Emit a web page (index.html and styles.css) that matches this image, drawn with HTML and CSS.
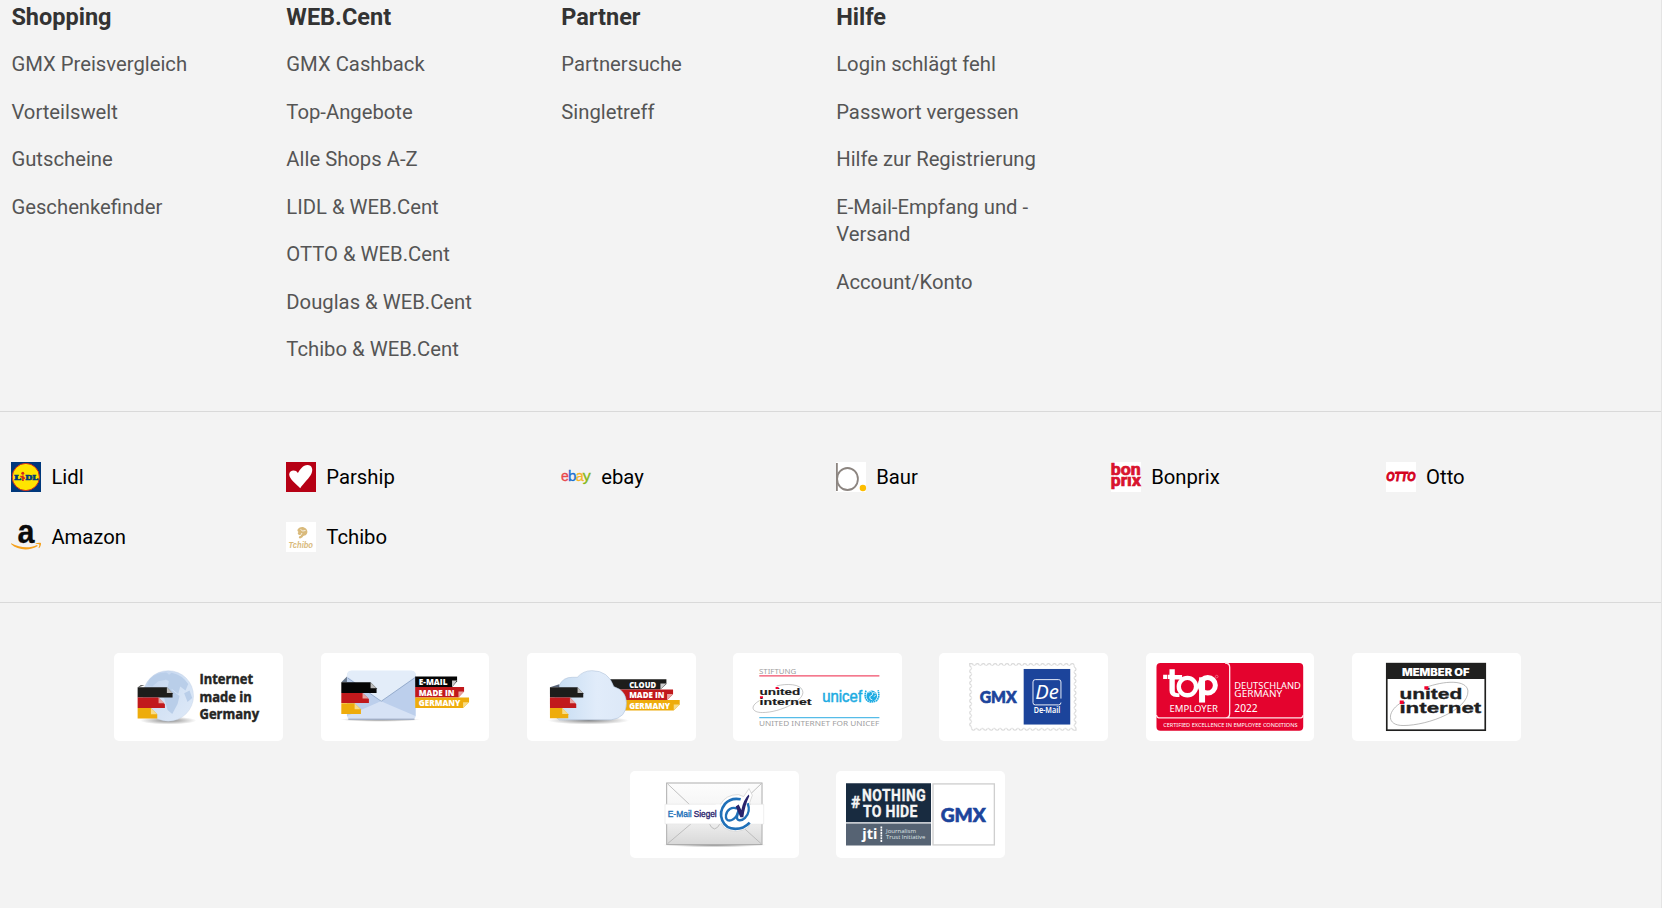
FILE: index.html
```html
<!DOCTYPE html>
<html lang="de">
<head>
<meta charset="utf-8">
<title>GMX</title>
<link rel="stylesheet" href="styles.css">
</head>
<body>
<footer class="footer">
  <nav class="links">
    <section class="col">
      <h3>Shopping</h3>
      <ul>
        <li><a>GMX Preisvergleich</a></li>
        <li><a>Vorteilswelt</a></li>
        <li><a>Gutscheine</a></li>
        <li><a>Geschenkefinder</a></li>
      </ul>
    </section>
    <section class="col">
      <h3>WEB.Cent</h3>
      <ul>
        <li><a>GMX Cashback</a></li>
        <li><a>Top-Angebote</a></li>
        <li><a>Alle Shops A-Z</a></li>
        <li><a>LIDL &amp; WEB.Cent</a></li>
        <li><a>OTTO &amp; WEB.Cent</a></li>
        <li><a>Douglas &amp; WEB.Cent</a></li>
        <li><a>Tchibo &amp; WEB.Cent</a></li>
      </ul>
    </section>
    <section class="col">
      <h3>Partner</h3>
      <ul>
        <li><a>Partnersuche</a></li>
        <li><a>Singletreff</a></li>
      </ul>
    </section>
    <section class="col">
      <h3>Hilfe</h3>
      <ul>
        <li><a>Login schlägt fehl</a></li>
        <li><a>Passwort vergessen</a></li>
        <li><a>Hilfe zur Registrierung</a></li>
        <li><a>E-Mail-Empfang und -<br>Versand</a></li>
        <li><a>Account/Konto</a></li>
      </ul>
    </section>
  </nav>

  <div class="shops">
    <a class="shop">
      <svg class="icon" viewBox="0 0 30 30"><path fill="#00387b" d="M0 0h30v30H0z"/><circle cx="14.8" cy="15" r="13.6" fill="#ffe500" stroke="#d22a1e" stroke-width="1"/><g font-family="DejaVu Serif" font-weight="700" font-size="8" fill="#00387b" stroke="#00387b" stroke-width=".7"><text x="3" y="18" textLength="7" lengthAdjust="spacingAndGlyphs">L</text><text x="14.2" y="18" textLength="12.8" lengthAdjust="spacingAndGlyphs">DL</text></g><circle cx="11.8" cy="11.2" r="1.5" fill="#d22a1e"/><path d="M9.4 14.2l4.6 2.2M11.9 13.5v5.5" stroke="#d22a1e" stroke-width="1.7"/></svg>
      <span>Lidl</span>
    </a>
    <a class="shop">
      <svg class="icon" viewBox="0 0 30 30"><path fill="#b60014" d="M0 0h30v30H0z"/><path fill="#fff" d="M14.2 26.2C11 22.5 3.2 17.2 3.2 12.5c0-4.400 6.500-5.600 8.700-1.500C14 7.500 17 3 21.500 3c4.500 0 5.600 4.400 4.200 8-2 5-8.200 10.200-11.500 15.200z"/></svg>
      <span>Parship</span>
    </a>
    <a class="shop">
      <svg class="icon" viewBox="0 0 30 30"><g font-family="Liberation Sans" font-size="14" stroke-width=".3"><text x="0" y="18.800" fill="#e8474c" stroke="#e8474c" textLength="7.800" lengthAdjust="spacingAndGlyphs">e</text><text x="7" y="18.800" fill="#1d6fd0" stroke="#1d6fd0" textLength="8.400" lengthAdjust="spacingAndGlyphs">b</text><text x="14.800" y="18.800" fill="#f6b42c" stroke="#f6b42c" textLength="8" lengthAdjust="spacingAndGlyphs">a</text><text x="21.800" y="18.800" fill="#86b817" stroke="#86b817" textLength="8" lengthAdjust="spacingAndGlyphs">y</text></g></svg>
      <span>ebay</span>
    </a>
    <a class="shop">
      <svg class="icon" viewBox="0 0 30 30"><path fill="#fff" d="M0 0h30v30H0z"/><path d="M.9 1v28" stroke="#8c8580" stroke-width="1.800"/><ellipse cx="11.500" cy="17" rx="10.400" ry="11" fill="none" stroke="#8c8580" stroke-width="1.800"/><circle cx="26.900" cy="26" r="3.200" fill="#fdbd00"/></svg>
      <span>Baur</span>
    </a>
    <a class="shop">
      <svg class="icon" viewBox="0 0 30 30"><path fill="#fff" d="M0 0h30v30H0z"/><g fill="#d8142d" stroke="#d8142d" stroke-width=".7" font-family="Roboto" font-weight="700"><text x="-.2" y="12.600" font-size="16.500" textLength="30" lengthAdjust="spacingAndGlyphs">bon</text><text x="-.2" y="24.200" font-size="16.500" textLength="30" lengthAdjust="spacingAndGlyphs">prıx</text></g></svg>
      <span>Bonprix</span>
    </a>
    <a class="shop">
      <svg class="icon" viewBox="0 0 30 30"><path fill="#fff" d="M0 0h30v30H0z"/><text x=".2" y="19.200" font-family="Liberation Sans" font-style="italic" font-weight="700" font-size="12.500" fill="#d4021d" stroke="#d4021d" stroke-width=".9" textLength="29.200" lengthAdjust="spacingAndGlyphs">OTTO</text></svg>
      <span>Otto</span>
    </a>
    <a class="shop">
      <svg class="icon" viewBox="0 0 30 30"><text x="6.500" y="20.800" font-family="Liberation Sans" font-weight="700" font-size="34" fill="#0a0a0a" stroke="#0a0a0a" stroke-width=".3" textLength="17" lengthAdjust="spacingAndGlyphs">a</text><path fill="#f5a11c" d="M.2 21.200C9 26 18.500 26.500 26 23l.8 1C19 28.900 7 28.800 0 22zM24.500 21.600c2-1 4-1 5.500-.6.200 2-.8 4-2 5.200l-.5-.4c.6-1.200 1-2.400.8-3.400-1.200-.4-2.400-.4-3.600-.3z"/></svg>
      <span>Amazon</span>
    </a>
    <a class="shop">
      <svg class="icon" viewBox="0 0 30 30"><path fill="#fff" d="M0 0h30v30H0z"/><g fill="#d9ba7c"><path d="M12 7c1-1.500 4-2.500 6-1.500 3 1 4 4 3 6-1 2.500-3 1.500-4 3-.8 1.200-3 2.800-4 1.500-.8-1.200 1-2 1.500-3C12 13 11 11.500 12.500 10c-1.200-.8-1.500-2-.5-3z"/><path d="M14.500 7.500q2 2.500 5 1M16 11q-1 2-2 3" stroke="#fff" stroke-width=".8" fill="none"/><text x="2.500" y="25.600" font-family="Liberation Sans" font-weight="700" font-style="italic" font-size="9.500" textLength="24.500" lengthAdjust="spacingAndGlyphs">Tchibo</text></g></svg>
      <span>Tchibo</span>
    </a>
  </div>

  <div class="seals">
    <a class="seal">
      <svg viewBox="27.500 39 506 263">
        <defs>
          <linearGradient id="globe" x1="0" y1="0" x2="1" y2="1"><stop offset="0" stop-color="#bdd0ec"/><stop offset=".5" stop-color="#d2e1f4"/><stop offset="1" stop-color="#dfeaf8"/></linearGradient>
          <radialGradient id="shade"><stop offset="0" stop-color="#888"/><stop offset="1" stop-color="#888" stop-opacity="0"/></radialGradient>
        </defs>
        <ellipse cx="190" cy="242" rx="85" ry="12" fill="url(#shade)"/>
        <circle cx="190" cy="168" r="76" fill="url(#globe)" stroke="#bccbe0"/>
        <path fill="#b9cee9" d="M134 118q22-22 52-20l12 12-18 10-20 4-18 16-16-4zM200 98q32 6 50 34l-8 20-16-12-6 22-18-14-16 4 6-28-14-8zM168 152l30-4 26 20-6 24-16 30-14-12-10-34-12-8zM238 160l16-8 8 22-14 12zM126 180l14 8-2 16-12-8z"/>
        <path d="M99 142l20-6h-12z" fill="#333"/>
        <path fill="#1d1d1b" d="M98 142h88l17 18v13H98z"/><path fill="#c1191c" d="M98 173h62l20 20v11H98z"/><path fill="#eeac0c" d="M98 204h40l19 19v13H98z"/>
        <path fill="#bbb" d="M186 142v17h17z"/><path fill="#e6a4a1" d="M161 173v17h18z"/><path fill="#f7dc88" d="M138 204v19h19z"/>
        <g font-family="Open Sans" font-weight="700" font-size="45" fill="#252523" stroke="#252523" stroke-width="1.500"><text x="284" y="133" textLength="161" lengthAdjust="spacingAndGlyphs">Internet</text><text x="284" y="186" textLength="157" lengthAdjust="spacingAndGlyphs">made in</text><text x="284" y="238" textLength="179" lengthAdjust="spacingAndGlyphs">Germany</text></g>
      </svg>
    </a>
    <a class="seal">
      <svg viewBox="32.500 39 506 263">
        <ellipse cx="210" cy="239" rx="120" ry="7" fill="url(#shade)"/>
        <rect x="110" y="92" width="207" height="148" rx="14" fill="#d6e2f5"/>
        <path fill="#bccfec" d="M316 112v116L212 184zM110 112v116l102-44z"/><path fill="#d6e2f5" d="M118 238l94-54 96 54z"/>
        <path fill="#e3edf9" d="M110 108q0-16 14-16h180q13 0 13 16l-104 76z"/><path d="M112 114l101 70 103-72" fill="none" stroke="#8ba3c5" stroke-width="2.500"/><path d="M114 238h199" stroke="#909fb7" stroke-width="3"/>
        <path d="M93 127l17-17v17z" fill="#68788c"/>
        <path fill="#050505" d="M93 127h88l18 18v14H93z"/><path fill="#c1191c" d="M93 159h64l19 18v12H93z"/><path fill="#eeac0c" d="M93 190h40l19 18v14H93z"/>
        <path fill="#bbb" d="M181 127v18h18z"/><path fill="#e6a4a1" d="M157 159v17h18z"/><path fill="#f7dc88" d="M133 190v18h18z"/>
        <path fill="#050505" d="M315 110h126v14l-15 17H315z"/><path fill="#c1191c" d="M315 141h147v14l-17 18H315z"/><path fill="#eeac0c" d="M315 173h162v14l-18 17H315z"/>
        <path fill="#ccc" d="M441 122h-15v19z"/><path fill="#e6a4a1" d="M462 155h-17v17z"/><path fill="#f7dc88" d="M477 187h-18v17z"/>
        <g font-family="Open Sans" font-weight="800" font-size="27" fill="#fff"><text x="326" y="136" textLength="86" lengthAdjust="spacingAndGlyphs">E-MAIL</text><text x="326" y="167" textLength="107" lengthAdjust="spacingAndGlyphs">MADE IN</text><text x="326" y="198" textLength="125" lengthAdjust="spacingAndGlyphs">GERMANY</text></g>
      </svg>
    </a>
    <a class="seal">
      <svg viewBox="35.500 39 506 263">
        <defs><linearGradient id="cloud"><stop offset="0" stop-color="#c4dbf1"/><stop offset=".6" stop-color="#e1ecfa"/><stop offset="1" stop-color="#dce8f7"/></linearGradient></defs>
        <path fill="#1d1d1b" d="M284 118h170v14l-18 17H284z"/><path fill="#c1191c" d="M300 149h174v14l-18 17H300z"/><path fill="#eeac0c" d="M320 180h174v14l-18 18H320z"/>
        <path fill="#ccc" d="M454 131h-18v18z"/><path fill="#e6a4a1" d="M474 162h-18v18z"/><path fill="#f7dc88" d="M494 194h-18v17z"/>
        <ellipse cx="220" cy="242" rx="122" ry="12" fill="url(#shade)"/>
        <path fill="url(#cloud)" stroke="#a5bad4" stroke-width="1.500" d="M132 240q-20-10-20-46l20-58q12-25 40-24h14q18-20 44-20 50 0 66 48 38 12 38 50 0 44-46 50z"/>
        <path d="M104 142l28-9v9z" fill="#596579"/>
        <path fill="#1d1d1b" d="M104 142h83l17 18v13H104z"/><path fill="#c1191c" d="M104 173h60l19 19v12H104z"/><path fill="#eeac0c" d="M104 204h37l18 19v12H104z"/>
        <path fill="#bbb" d="M187 142v17h17z"/><path fill="#e6a4a1" d="M164 173v17h18z"/><path fill="#f7dc88" d="M141 204v18h18z"/>
        <g font-family="Open Sans" font-weight="800" font-size="27" fill="#fff"><text x="342" y="143" textLength="81" lengthAdjust="spacingAndGlyphs">CLOUD</text><text x="342" y="175" textLength="106" lengthAdjust="spacingAndGlyphs">MADE IN</text><text x="342" y="206" textLength="123" lengthAdjust="spacingAndGlyphs">GERMANY</text></g>
      </svg>
    </a>
    <a class="seal">
      <svg viewBox="39.500 39 506 263">
        <g font-family="Noto Sans" font-size="24" fill="#a0a0a0"><text x="117" y="102" textLength="112" lengthAdjust="spacingAndGlyphs">STIFTUNG</text><text x="117" y="258" textLength="362" lengthAdjust="spacingAndGlyphs">UNITED INTERNET FOR UNICEF</text></g>
        <path d="M118 108h361" stroke="#f14d68" stroke-width="4"/><path d="M118 233h361" stroke="#56bce8" stroke-width="4"/>
        <path d="M119 182c-32 18-22 36 8 36 55 0 132-38 121-66-6-20-47-22-78-14" fill="none" stroke="#aaa" stroke-width="2"/>
        <g font-family="Liberation Sans" font-weight="700" font-size="30" fill="#1c1c1c" stroke="#1c1c1c" stroke-width=".6"><text x="119" y="165" textLength="122" lengthAdjust="spacingAndGlyphs">united</text><text x="119" y="194" textLength="156" lengthAdjust="spacingAndGlyphs">internet</text></g>
        <path fill="#f4002d" d="M167 141h9v6h-9zM120 169h9v6h-9z"/>
        <text x="307" y="186" font-family="Liberation Sans" font-size="47" fill="#1cabe2" stroke="#1cabe2" stroke-width="1.500" textLength="120" lengthAdjust="spacingAndGlyphs">unicef</text>
        <circle cx="456" cy="168" r="16" fill="#1cabe2"/><path d="M446 158q8-8 12 0t-8 12q-2 8 8 10M460 158l8 2M462 170l6-4" fill="none" stroke="#fff" stroke-width="2.500"/><path d="M439 152q-7 18 3 30 14 8 29 0 10-12 4-31" fill="none" stroke="#1cabe2" stroke-width="5" stroke-dasharray="5 1.500"/>
      </svg>
    </a>
    <a class="seal">
      <svg viewBox="43 39 506 263">
        <rect x="140" y="76" width="309" height="190" fill="none" stroke="#d9d9d9" stroke-width="14" stroke-linecap="round" stroke-dasharray=".1 17.720"/>
        <rect x="140" y="76" width="309" height="190" fill="none" stroke="#fff" stroke-width="7" stroke-linecap="round" stroke-dasharray=".1 17.720"/>
        <rect x="140" y="76" width="309" height="190" fill="#fff" stroke="#e2e2e2" stroke-width="4" stroke-dasharray="0 6.500 4.800 6.520"/>
        <rect x="297" y="87" width="140" height="167" fill="#1c449b"/>
        <text x="165" y="188" font-family="Lato" font-weight="900" font-size="50" fill="#1c449b" stroke="#1c449b" stroke-width="2" textLength="111" lengthAdjust="spacingAndGlyphs">GMX</text>
        <path d="M409 176v-50q0-7-7-7h-70q-7 0-7 7v62q0 7 7 7h70q7 0 7-7" fill="none" stroke="#e7ecf7" stroke-width="3"/>
        <text x="332" y="177" font-family="Noto Sans" font-style="italic" font-size="59" fill="#fff" textLength="71" lengthAdjust="spacingAndGlyphs">De</text>
        <text x="327" y="219" font-family="Noto Sans" font-weight="600" font-size="24" fill="#fff" textLength="80" lengthAdjust="spacingAndGlyphs">De-Mail</text>
      </svg>
    </a>
    <a class="seal">
      <svg viewBox="47 39 506 263">
        <rect x="78" y="69" width="441" height="204" rx="12" fill="#e4032e"/>
        <path d="M78 225q0 9 12 9h195q13 0 13-13V82q0-13-14-13M285 234h222q12 0 12-9" fill="none" stroke="#ffe4e8" stroke-width="4"/>
        <path fill="#fff" d="M98 104h12v13H98zM112 104h6v13h-6zM117 88h16v17h22v14h-22v35q0 6 9 6h5v11h-9q-21 0-21-20z"/>
        <circle cx="171" cy="140" r="26" fill="none" stroke="#fff" stroke-width="13"/><circle cx="232" cy="136" r="23" fill="none" stroke="#fff" stroke-width="15"/><path fill="#fff" d="M206 112h18v76h-18z"/><circle cx="259" cy="110" r="4" fill="none" stroke="#fff"/>
        <g font-family="Noto Sans" fill="#fff"><text x="117" y="215" font-size="28" textLength="146" lengthAdjust="spacingAndGlyphs">EMPLOYER</text><text x="312" y="146" font-size="28" textLength="200" lengthAdjust="spacingAndGlyphs">DEUTSCHLAND</text><text x="312" y="171" font-size="28" textLength="144" lengthAdjust="spacingAndGlyphs">GERMANY</text><text x="312" y="216" font-size="31" textLength="70" lengthAdjust="spacingAndGlyphs">2022</text><text x="98" y="262" font-size="18" textLength="404" lengthAdjust="spacingAndGlyphs">CERTIFIED EXCELLENCE IN EMPLOYEE CONDITIONS</text></g>
      </svg>
    </a>
    <a class="seal">
      <svg viewBox="666 39 506 263">
        <rect x="770" y="71" width="296" height="200" fill="#fff" stroke="#20201f" stroke-width="5"/><path fill="#20201f" d="M768 69h300v48H768z"/>
        <text x="816" y="107" font-family="Inter" font-weight="900" font-size="31" fill="#fff" textLength="203" lengthAdjust="spacingAndGlyphs">MEMBER OF</text>
        <path d="M809 191c-38 25-40 66 10 66 78 0 197-48 195-104-4-35-72-31-128-10" fill="none" stroke="#999" stroke-width="2"/>
        <g font-family="Liberation Sans" font-weight="700" font-size="46" fill="#20201f" stroke="#20201f" stroke-width="1"><text x="808" y="177" textLength="189" lengthAdjust="spacingAndGlyphs">united</text><text x="808" y="220" textLength="246" lengthAdjust="spacingAndGlyphs">internet</text></g>
        <path fill="#f4002d" d="M883 139h12v10h-12zM809 182h12v10h-12z"/>
      </svg>
    </a>
    <a class="seal">
      <svg viewBox="45 48 506 261">
        <defs><linearGradient id="paper" x2="0" y2="1"><stop offset="0" stop-color="#fdfdfd"/><stop offset=".6" stop-color="#f1f1f1"/><stop offset="1" stop-color="#d8d8d8"/></linearGradient></defs>
        <ellipse cx="298" cy="269" rx="158" ry="7" fill="url(#shade)"/>
        <path d="M155 83h286v185H155z" fill="url(#paper)" stroke="#adadad" stroke-width="3"/><path d="M158 86l123 116q17 38 36 0L438 86M158 265l85-72M438 265l-80-72" fill="none" stroke="#b5b5b5" stroke-width="2.500"/>
        <path fill="#fff" stroke="#e7e7e7" stroke-width="2" d="M150 147h296v59H150z"/>
        <path fill="#fff" stroke="#ccc" stroke-width="2" d="M386 124l16-24 10 20-8 22q12 44-4 74-36 24-72 2-28-32-12-70 16-30 54-30z"/>
        <path fill="#fff" d="M302 148h15v56h-15zM403 149h40v56h-40z"/>
        <g font-family="Liberation Sans" font-size="25" stroke-width="1"><text x="158" y="185" fill="#2070b8" stroke="#2070b8" textLength="72" lengthAdjust="spacingAndGlyphs">E-Mail</text><text x="236" y="185" fill="#28236c" stroke="#28236c" textLength="69" lengthAdjust="spacingAndGlyphs">Siegel</text></g>
        <path d="M377 132q-30-6-47 14c-26 33-6 75 31 75 17 0 30-5 43-19" fill="none" stroke="#2070b8" stroke-width="8"/>
        <path d="M366 160c-16-6-30 3-33 19-3 22 18 22 32 2l7-19-6 22c-2 14 14 14 24 4 12-12 14-28 8-44" fill="none" stroke="#2070b8" stroke-width="7"/>
        <path fill="#28236c" d="M362 154l9-6 8 16q6-30 22-46l2 4q-14 30-18 64h-9z"/>
      </svg>
    </a>
    <a class="seal">
      <svg viewBox="663 48 506 261">
        <path fill="#182b40" d="M693 84h255v117H693z"/><path fill="#566373" d="M693 205h255v66H693z"/><rect x="954" y="86" width="184" height="183" fill="#fff" stroke="#cfcfcf" stroke-width="4"/>
        <g font-family="Roboto" font-weight="700" font-size="51" fill="#f5f5f5" stroke="#f5f5f5" stroke-width="1"><text x="708" y="158" textLength="28" lengthAdjust="spacingAndGlyphs">#</text><text x="741" y="138" letter-spacing="2" textLength="193" lengthAdjust="spacingAndGlyphs">NOTHING</text><text x="744" y="186" letter-spacing="1" textLength="164" lengthAdjust="spacingAndGlyphs">TO HIDE</text></g>
        <text x="742" y="251" font-family="Noto Sans" font-weight="700" font-size="42" fill="#fff" textLength="45" lengthAdjust="spacingAndGlyphs">jti</text><path d="M799 214v46" stroke="#fff" stroke-width="5" stroke-dasharray="6 2"/>
        <g font-family="Open Sans" font-size="17" fill="#dfe3e7"><text x="813" y="234" textLength="90" lengthAdjust="spacingAndGlyphs">Journalism</text><text x="813" y="252" textLength="118" lengthAdjust="spacingAndGlyphs">Trust Initiative</text></g>
        <text x="977" y="200" font-family="Lato" font-weight="900" font-size="59" fill="#1c449b" stroke="#1c449b" stroke-width="2" textLength="135" lengthAdjust="spacingAndGlyphs">GMX</text>
      </svg>
    </a>
  </div>
</footer>
</body>
</html>
```

FILE: styles.css
```css
* { box-sizing: border-box; }

body {
  margin: 0;
  background: #f3f3f3;
  color: #000;
  font: 20.25px/27.2px Roboto, sans-serif;
}

.footer {
  height: 908px;
  overflow: hidden;
  border-right: 1px solid #e4e4e4;
}

.links,
.shops {
  display: grid;
  grid-template-columns: repeat(6, 274.95px);
  padding-left: 11.4px;
}

.links {
  height: 411px;
  padding-top: 0.6px;
}

.col h3 {
  margin: 0 0 18.75px;
  font-size: 23.5px;
  line-height: 32px;
  font-weight: 700;
  color: #333;
}

.col ul {
  margin: 0;
  padding: 0;
  list-style: none;
}

.col li { margin-bottom: 20.3px; }

.col a { color: #555; }

.shops {
  row-gap: 30px;
  padding-top: 50px;
  padding-bottom: 50px;
  border-top: 1px solid #d9d9d9;
}

.shop {
  display: flex;
  align-items: center;
  gap: 10px;
  height: 30px;
}

.shop span { padding-top: 2px; }

.icon {
  flex: none;
  width: 30px;
  height: 30px;
  overflow: visible;
}

.seals {
  display: flex;
  flex-wrap: wrap;
  justify-content: center;
  gap: 30px 37.6px;
  padding: 50.3px 101px 50px 75px;
  border-top: 1px solid #d9d9d9;
}

.seal {
  width: 168.7px;
  height: 87.5px;
  border-radius: 5px;
  background: #fff;
}

.seal svg {
  display: block;
  width: 100%;
  height: 100%;
}
```
